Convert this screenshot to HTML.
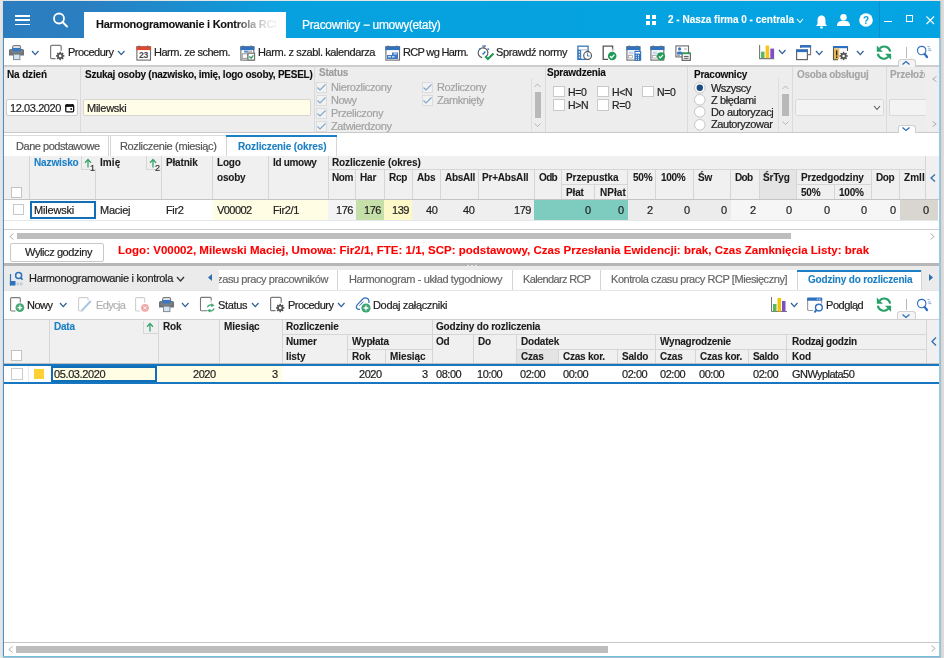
<!DOCTYPE html><html><head><meta charset="utf-8"><style>
html,body{margin:0;padding:0;}
body{width:944px;height:658px;overflow:hidden;background:#e5e5e5;position:relative;font-family:"Liberation Sans",sans-serif;-webkit-font-smoothing:antialiased;}
.t{will-change:transform;-webkit-text-stroke:0.2px currentColor}
.a{position:absolute;}
.t{position:absolute;white-space:nowrap;}
svg{overflow:visible}
</style></head><body>
<div class="a" style="left:0px;top:0px;width:944px;height:658px;background:#e5e5e5"></div>
<div class="a" style="left:940px;top:0px;width:4px;height:658px;background:linear-gradient(90deg,#d3d3d3,#dedede)"></div>
<div class="a" style="left:2px;top:0px;width:1px;height:658px;background:#e0dcd8"></div>
<div class="a" style="left:3px;top:1px;width:937px;height:656px;background:#fff"></div>
<div class="a" style="left:3px;top:1px;width:1px;height:656px;background:#4a90c8"></div>
<div class="a" style="left:939px;top:1px;width:1px;height:656px;background:#8ccfee"></div>
<div class="a" style="left:940px;top:1px;width:1px;height:657px;background:#aabcc6"></div>
<div class="a" style="left:3px;top:656px;width:937px;height:1px;background:#70bedd"></div>
<div class="a" style="left:3px;top:657px;width:938px;height:1px;background:#b0c0ca"></div>
<div class="a" style="left:3px;top:1px;width:937px;height:37px;background:linear-gradient(90deg,#2b7dbf 0%,#2a7fc1 9%,#1a8fd0 20%,#07a1df 31%,#04a4e2 100%)"></div>
<div class="a" style="left:15px;top:15px;width:15px;height:1.9px;background:#fff"></div>
<div class="a" style="left:15px;top:19.3px;width:15px;height:1.9px;background:#fff"></div>
<div class="a" style="left:15px;top:23.6px;width:15px;height:1.9px;background:#fff"></div>
<svg class="a" style="left:52px;top:12px;" width="18" height="18" viewBox="0 0 18 18"><circle cx="7" cy="6.5" r="5" fill="none" stroke="#fff" stroke-width="1.8"/><path d="M10.5 10 L15 14.5" stroke="#fff" stroke-width="2" stroke-linecap="round"/></svg>
<div class="a" style="left:84px;top:12px;width:202px;height:26px;background:#fff"></div>
<div class="t" style="left:96.00px;top:17.49px;font-size:11px;line-height:14px;color:#111;font-weight:bold;-webkit-text-stroke:0.1px currentColor;letter-spacing:-0.248px;width:180.00px;overflow:hidden;">Harmonogramowanie i Kontrola RCP</div>
<div class="a" style="left:234px;top:14px;width:52px;height:22px;background:linear-gradient(90deg,rgba(255,255,255,0) 0%,rgba(255,255,255,.55) 30%,rgba(255,255,255,.85) 60%,#fff 90%)"></div>
<div class="t" style="left:301.50px;top:16.84px;font-size:12px;line-height:16px;color:#fff;letter-spacing:-0.342px;">Pracownicy − umowy(etaty)</div>
<div class="a" style="left:646px;top:15px;width:4px;height:4px;background:#fff"></div>
<div class="a" style="left:646px;top:21px;width:4px;height:4px;background:#fff"></div>
<div class="a" style="left:652px;top:15px;width:4px;height:4px;background:#fff"></div>
<div class="a" style="left:652px;top:21px;width:4px;height:4px;background:#fff"></div>
<div class="t" style="left:668.00px;top:13.04px;font-size:10px;line-height:13px;color:#fff;font-weight:bold;-webkit-text-stroke:0.1px currentColor;letter-spacing:-0.006px;">2 - Nasza firma 0 - centrala</div>
<svg class="a" style="left:795.5px;top:17.5px;" width="8" height="5.5" viewBox="0 0 8 5.5"><path d="M1 1 L4.0 4.5 L7 1" fill="none" stroke="#fff" stroke-width="1.1"/></svg>
<svg class="a" style="left:815px;top:14px;" width="13" height="15" viewBox="0 0 13 15"><path d="M6.5 1.5 C3.5 1.5 2.5 4 2.5 6.5 L2.5 10 L1 12 L12 12 L10.5 10 L10.5 6.5 C10.5 4 9.5 1.5 6.5 1.5Z" fill="#fff"/><rect x="5" y="12.5" width="3" height="2" rx="1" fill="#fff"/></svg>
<svg class="a" style="left:837px;top:14px;" width="13" height="12" viewBox="0 0 13 12"><circle cx="6.5" cy="3.2" r="3.2" fill="#fff"/><path d="M0 12 C0 7.5 3 6.8 6.5 6.8 C10 6.8 13 7.5 13 12Z" fill="#fff"/></svg>
<svg class="a" style="left:859px;top:13px;" width="14" height="14" viewBox="0 0 14 14"><circle cx="7" cy="7" r="6.8" fill="#fff"/><text x="7" y="11" font-family="Liberation Sans" font-weight="bold" font-size="10" text-anchor="middle" fill="#0aa0df">?</text></svg>
<div class="a" style="left:879px;top:1px;width:1px;height:37px;background:#0b8fcb"></div>
<div class="a" style="left:884px;top:21px;width:8px;height:1px;background:#fff"></div>
<div class="a" style="left:906px;top:15px;width:7px;height:7px;border:1px solid #fff;box-sizing:border-box"></div>
<svg class="a" style="left:926px;top:15.5px;" width="9" height="9" viewBox="0 0 9 9"><path d="M0.5 0.5 L8 8 M8 0.5 L0.5 8" stroke="#fff" stroke-width="1.1"/></svg>
<div class="a" style="left:4px;top:65px;width:935px;height:2px;background:#cdcdcd"></div>
<svg class="a" style="left:9px;top:45px;" width="16" height="15" viewBox="0 0 16 15"><rect x="3.6" y="0.6" width="8" height="5" rx="1.5" fill="#fff" stroke="#7a7a7a" stroke-width="1.1"/><path d="M1.5 4 H13.5 A1.5 1.5 0 0 1 15 5.5 V10.6 H0 V5.5 A1.5 1.5 0 0 1 1.5 4Z" fill="#6e7175"/><rect x="1.6" y="5" width="11.8" height="3" fill="#7d8084"/><rect x="3.4" y="2.8" width="8.2" height="3.7" fill="#3a78c0"/><rect x="4.5" y="9.2" width="6.4" height="5.4" fill="#d3e6f6" stroke="#858a8f" stroke-width="1"/></svg>
<svg class="a" style="left:30.5px;top:49.5px;" width="8.5" height="5.6" viewBox="0 0 8.5 5.6"><path d="M1 1 L4.25 4.6 L7.5 1" fill="none" stroke="#2c5f9a" stroke-width="1.25"/></svg>
<svg class="a" style="left:50px;top:45px;" width="15" height="15" viewBox="0 0 15 15"><path d="M5.5 13.6 H1.8 A1.2 1.2 0 0 1 0.6 12.4 V1.6 A1.2 1.2 0 0 1 1.8 0.4 H10 A1.2 1.2 0 0 1 11.2 1.6 V5.8" fill="none" stroke="#7a7a7a" stroke-width="1.2"/><path d="M13.29 10.08 L14.44 10.19 L14.44 11.61 L13.29 11.72 L12.97 12.51 L13.70 13.40 L12.70 14.40 L11.81 13.67 L11.02 13.99 L10.91 15.14 L9.49 15.14 L9.38 13.99 L8.59 13.67 L7.70 14.40 L6.70 13.40 L7.43 12.51 L7.11 11.72 L5.96 11.61 L5.96 10.19 L7.11 10.08 L7.43 9.29 L6.70 8.40 L7.70 7.40 L8.59 8.13 L9.38 7.81 L9.49 6.66 L10.91 6.66 L11.02 7.81 L11.81 8.13 L12.70 7.40 L13.70 8.40 L12.97 9.29Z" fill="#555"/><circle cx="10.2" cy="10.9" r="1.3" fill="#fff"/></svg>
<div class="t" style="left:67.80px;top:45.49px;font-size:11px;line-height:14px;color:#222;letter-spacing:-0.526px;">Procedury</div>
<svg class="a" style="left:117px;top:49.5px;" width="8.5" height="5.6" viewBox="0 0 8.5 5.6"><path d="M1 1 L4.25 4.6 L7.5 1" fill="none" stroke="#2c5f9a" stroke-width="1.25"/></svg>
<svg class="a" style="left:135.6px;top:44.5px;" width="16" height="16" viewBox="0 0 16 16"><rect x="0.9" y="1.8" width="13.6" height="13.3" fill="#fff" stroke="#6c6c6c" stroke-width="1.1"/><rect x="0.4" y="1.3" width="14.7" height="3.8" fill="#df4a2e"/><rect x="2.6" y="0.5" width="1.2" height="2.8" fill="#6c6c6c"/><rect x="11.1" y="0.5" width="1.2" height="2.8" fill="#6c6c6c"/><text x="7.6" y="13.4" font-family="Liberation Sans" font-weight="bold" font-size="8.6" text-anchor="middle" fill="#444" letter-spacing="-0.3">23</text></svg>
<div class="t" style="left:153.60px;top:45.49px;font-size:11px;line-height:14px;color:#222;letter-spacing:-0.475px;">Harm. ze schem.</div>
<svg class="a" style="left:240px;top:44.5px;" width="16" height="16" viewBox="0 0 16 16"><rect x="0.9" y="1.8" width="12.9" height="13.3" fill="#fff" stroke="#6c6c6c" stroke-width="1.1"/><rect x="0.4" y="1.3" width="14.0" height="3.8" fill="#2f72bf"/><rect x="2.6" y="0.5" width="1.2" height="2.8" fill="#6c6c6c"/><rect x="10.4" y="0.5" width="1.2" height="2.8" fill="#6c6c6c"/><rect x="4" y="5.6" width="4.5" height="2" fill="#5a8fd0"/><rect x="8.5" y="5.6" width="3.5" height="2" fill="#bbb"/><rect x="2.2" y="8.8" width="5.5" height="4.5" fill="#fff" stroke="#8a8a8a" stroke-width="0.9"/><rect x="8" y="8.2" width="6.6" height="6.9" fill="#fff" stroke="#6c6c6c" stroke-width="1.1"/><path d="M9.3 11.6 l1.8 1.6 l2.3 -2.8" fill="none" stroke="#2aa05a" stroke-width="1.4"/></svg>
<div class="t" style="left:257.80px;top:45.49px;font-size:11px;line-height:14px;color:#222;letter-spacing:-0.407px;">Harm. z szabl. kalendarza</div>
<svg class="a" style="left:385px;top:44.5px;" width="16" height="16" viewBox="0 0 16 16"><rect x="0.9" y="1.8" width="13.6" height="13.3" fill="#fff" stroke="#6c6c6c" stroke-width="1.1"/><rect x="0.4" y="1.3" width="14.7" height="3.8" fill="#2f72bf"/><rect x="2.6" y="0.5" width="1.2" height="2.8" fill="#6c6c6c"/><rect x="11.1" y="0.5" width="1.2" height="2.8" fill="#6c6c6c"/><rect x="2" y="10" width="11" height="4" fill="#3e7bc4"/><rect x="7" y="7.5" width="6" height="2.5" fill="#3e7bc4"/><rect x="3" y="11" width="3" height="1.5" fill="#bcdcf2"/><rect x="7" y="11" width="2.5" height="1.5" fill="#bcdcf2"/><rect x="8.5" y="8.2" width="3.5" height="1.3" fill="#bcdcf2"/></svg>
<div class="t" style="left:403.40px;top:45.49px;font-size:11px;line-height:14px;color:#222;letter-spacing:-0.679px;">RCP wg Harm.</div>
<svg class="a" style="left:477px;top:44.5px;" width="18" height="16" viewBox="0 0 18 16"><path d="M9.2 11.5 A4.9 4.9 0 1 0 5.2 12.6" fill="none" stroke="#555" stroke-width="1.1"/><rect x="5.3" y="0.4" width="3.6" height="1.3" fill="#2d6fc0"/><rect x="6.6" y="1.4" width="1.2" height="2" fill="#777"/><path d="M2.2 4.8 L3.4 3.6 M11.8 4.8 L10.6 3.6" stroke="#2d6fc0" stroke-width="1.4"/><path d="M5.6 9.4 L8.4 6.4" stroke="#2d6fc0" stroke-width="1.5"/><path d="M8.2 11.3 L10.9 14 L16.5 8.4" fill="none" stroke="#1f9a57" stroke-width="2.1"/></svg>
<div class="t" style="left:496.40px;top:45.49px;font-size:11px;line-height:14px;color:#222;letter-spacing:-0.401px;">Sprawdź normy</div>
<svg class="a" style="left:577px;top:44.5px;" width="16" height="16" viewBox="0 0 16 16"><rect x="0.9" y="1.2" width="10.2" height="13.2" fill="#fff" stroke="#3a78c0" stroke-width="1.3"/><rect x="0.6" y="4.7" width="3.6" height="10" fill="#3a78c0"/><rect x="1.8" y="6.3" width="1.3" height="1.3" fill="#fff"/><rect x="1.8" y="9" width="1.3" height="1.3" fill="#fff"/><rect x="1.8" y="11.7" width="1.3" height="1.3" fill="#fff"/><path d="M4.2 4.8 H11" stroke="#9bb9dc" stroke-width="0.9"/><circle cx="10.6" cy="10.6" r="3.9" fill="#fff" stroke="#555" stroke-width="1.2"/><rect x="9.6" y="5.6" width="2" height="1.2" fill="#555"/><path d="M10.4 8.3 V11 H12.6" fill="none" stroke="#3a78c0" stroke-width="1"/></svg>
<svg class="a" style="left:602px;top:44.5px;" width="16" height="16" viewBox="0 0 16 16"><path d="M6 14.3 H1.2 V1.2 H10.6 V5.6" fill="none" stroke="#555" stroke-width="1.3"/><path d="M10.6 3.5 V5.8" stroke="#bbb" stroke-width="1.3"/><circle cx="10.2" cy="11" r="4.3" fill="#1f9a57"/><path d="M8 11.2 l1.6 1.6 l2.8 -3.2" fill="none" stroke="#fff" stroke-width="1.3"/></svg>
<svg class="a" style="left:625.6px;top:44.5px;" width="16" height="16" viewBox="0 0 16 16"><rect x="0.9" y="1.8" width="12.9" height="13.3" fill="#fff" stroke="#6c6c6c" stroke-width="1.1"/><rect x="0.4" y="1.3" width="14.0" height="3.8" fill="#2f72bf"/><rect x="2.6" y="0.5" width="1.2" height="2.8" fill="#6c6c6c"/><rect x="10.4" y="0.5" width="1.2" height="2.8" fill="#6c6c6c"/><rect x="2.5" y="6.5" width="5" height="3" fill="#c8d8ea"/><rect x="2.5" y="10.5" width="4" height="2.5" fill="#fff" stroke="#999" stroke-width="0.7"/><rect x="8.4" y="5.8" width="6.8" height="10" rx="0.6" fill="#2f72bf"/><rect x="9.5" y="7" width="4.6" height="1.6" fill="#fff"/><path d="M9.8 10.3 h1 M12 10.3 h1 M9.8 12.3 h1 M12 12.3 h1 M9.8 14.3 h1 M12 14.3 h1" stroke="#fff" stroke-width="1"/></svg>
<svg class="a" style="left:650px;top:44.5px;" width="16" height="16" viewBox="0 0 16 16"><rect x="0.9" y="1.8" width="12.9" height="13.3" fill="#fff" stroke="#6c6c6c" stroke-width="1.1"/><rect x="0.4" y="1.3" width="14.0" height="3.8" fill="#2f72bf"/><rect x="2.6" y="0.5" width="1.2" height="2.8" fill="#6c6c6c"/><rect x="10.4" y="0.5" width="1.2" height="2.8" fill="#6c6c6c"/><rect x="2.5" y="6.5" width="5" height="3" fill="#c8d8ea"/><rect x="2.5" y="10.5" width="4" height="2.5" fill="#fff" stroke="#999" stroke-width="0.7"/><circle cx="11" cy="11.3" r="4" fill="#1f9a57"/><path d="M9 11.5 l1.4 1.4 l2.6 -3" fill="none" stroke="#fff" stroke-width="1.3"/></svg>
<svg class="a" style="left:674.6px;top:44.5px;" width="16" height="16" viewBox="0 0 16 16"><rect x="0.9" y="0.9" width="12.6" height="11" fill="#fff" stroke="#6c6c6c" stroke-width="1.1"/><circle cx="4.6" cy="3.9" r="1.6" fill="#3a78c0"/><path d="M2 9.5 V7.6 C2 6 7.2 6 7.2 7.6 V9.5Z" fill="#3a78c0"/><rect x="2" y="9.4" width="3" height="1.6" fill="#9ab"/><path d="M9 4 h3" stroke="#aaa" stroke-width="1"/><rect x="7.1" y="8.1" width="8.2" height="7.2" fill="#fff" stroke="#555" stroke-width="1.1"/><rect x="6.6" y="7.6" width="9.2" height="1.6" fill="#2aa05a"/><path d="M8.8 11.4 h4.8 M8.8 13.3 h4.8" stroke="#555" stroke-width="1"/></svg>
<svg class="a" style="left:758.8px;top:45.3px;" width="16" height="15" viewBox="0 0 16 15"><path d="M0.6 0 V13.6 H15.2" fill="none" stroke="#777" stroke-width="1.1"/><rect x="2" y="6.6" width="3.5" height="6.5" fill="#5bb865"/><rect x="6.6" y="0.6" width="3.6" height="12.5" fill="#fcc419"/><rect x="11.3" y="3.6" width="3.8" height="9.5" fill="#7e4fc8"/></svg>
<svg class="a" style="left:778px;top:49.2px;" width="8.5" height="5.6" viewBox="0 0 8.5 5.6"><path d="M1 1 L4.25 4.6 L7.5 1" fill="none" stroke="#2c5f9a" stroke-width="1.25"/></svg>
<svg class="a" style="left:796px;top:45px;" width="16" height="16" viewBox="0 0 16 16"><path d="M4.6 3 V0.5 H14.6 V9.6 H11.5" fill="none" stroke="#777" stroke-width="1.1"/><rect x="4.1" y="0.2" width="10.9" height="2.4" fill="#2f6fbf"/><rect x="0.6" y="5" width="10.8" height="9.6" fill="#fff" stroke="#666" stroke-width="1.2"/><rect x="0" y="4.5" width="12" height="2.6" fill="#2f6fbf"/></svg>
<svg class="a" style="left:815.2px;top:49.5px;" width="8.5" height="5.6" viewBox="0 0 8.5 5.6"><path d="M1 1 L4.25 4.6 L7.5 1" fill="none" stroke="#2c5f9a" stroke-width="1.25"/></svg>
<svg class="a" style="left:833px;top:45.5px;" width="16" height="15" viewBox="0 0 16 15"><path d="M14.5 5 V0.5 H0.5 V13.6 H5" fill="none" stroke="#555" stroke-width="1.1"/><rect x="0" y="0" width="15" height="2.2" fill="#2f6fbf"/><rect x="1" y="2.6" width="5.2" height="10.6" fill="#e9b64f"/><rect x="3" y="4.5" width="1.3" height="5" fill="#222"/><rect x="3" y="10.5" width="1.3" height="1.5" fill="#222"/><path d="M13.60 9.21 L14.74 9.31 L14.74 10.69 L13.60 10.79 L13.28 11.56 L14.02 12.44 L13.04 13.42 L12.16 12.68 L11.39 13.00 L11.29 14.14 L9.91 14.14 L9.81 13.00 L9.04 12.68 L8.16 13.42 L7.18 12.44 L7.92 11.56 L7.60 10.79 L6.46 10.69 L6.46 9.31 L7.60 9.21 L7.92 8.44 L7.18 7.56 L8.16 6.58 L9.04 7.32 L9.81 7.00 L9.91 5.86 L11.29 5.86 L11.39 7.00 L12.16 7.32 L13.04 6.58 L14.02 7.56 L13.28 8.44Z" fill="#555"/><circle cx="10.6" cy="10" r="1.2" fill="#fff"/></svg>
<svg class="a" style="left:856.2px;top:49.5px;" width="8.5" height="5.6" viewBox="0 0 8.5 5.6"><path d="M1 1 L4.25 4.6 L7.5 1" fill="none" stroke="#2c5f9a" stroke-width="1.25"/></svg>
<svg class="a" style="left:875.5px;top:44.8px;" width="16" height="16" viewBox="0 0 16 16"><path d="M14.2 6.6 A6.1 6.1 0 0 0 3.6 3.6" fill="none" stroke="#27a068" stroke-width="2.1"/><path d="M0.8 0.6 V6.7 H6.9Z" fill="#27a068"/><path d="M1.8 8.7 A6.1 6.1 0 0 0 12.4 11.6" fill="none" stroke="#27a068" stroke-width="2.1"/><path d="M15.1 14.8 V8.7 H9Z" fill="#27a068"/></svg>
<div class="a" style="left:906px;top:47px;width:1px;height:10.5px;background:#b8b8b8"></div>
<svg class="a" style="left:917px;top:45.3px;" width="16" height="15" viewBox="0 0 16 15"><circle cx="4.7" cy="5.5" r="4.2" fill="none" stroke="#2f6fc0" stroke-width="1.15"/><path d="M7.6 8.9 L10 12" stroke="#2f6fc0" stroke-width="2.3" stroke-linecap="round"/><path d="M10.4 1.6 h2.4 M10.9 3.9 h3 M11.4 5.6 h3" stroke="#86a6cc" stroke-width="0.9"/></svg>
<div class="a" style="left:897.5px;top:59px;width:18.5px;height:7.5px;background:#f4f4f4;border:1px solid #cfcfcf;border-bottom:none;border-radius:3px 3px 0 0;box-sizing:border-box"></div>
<svg class="a" style="left:902px;top:60.5px;" width="8" height="4" viewBox="0 0 8 4"><path d="M0.5 3.5 L4 0.5 L7.5 3.5" fill="none" stroke="#2f6fb0" stroke-width="1.3"/></svg>
<div class="a" style="left:4px;top:67px;width:935px;height:65px;background:#ededed"></div>
<div class="a" style="left:4px;top:132px;width:935px;height:1px;background:#c9c9c9"></div>
<div class="a" style="left:80px;top:67px;width:1px;height:65px;background:#dadada"></div>
<div class="t" style="left:7.10px;top:68.13px;font-size:10px;line-height:13px;color:#0e0e0e;font-weight:bold;-webkit-text-stroke:0.1px currentColor;letter-spacing:-0.140px;">Na dzień</div>
<div class="a" style="left:6px;top:99px;width:72px;height:17px;background:#fff;border:1px solid #cdcdcd;border-radius:2px;box-sizing:border-box"></div>
<div class="t" style="left:9.80px;top:100.69px;font-size:11px;line-height:14px;color:#222;letter-spacing:-0.405px;">12.03.2020</div>
<svg class="a" style="left:65px;top:103px;" width="10" height="10" viewBox="0 0 10 10"><rect x="0.75" y="1.9" width="7.9" height="6.9" rx="1" fill="#fff" stroke="#111" stroke-width="1.3"/><rect x="0.4" y="1.6" width="8.6" height="2.3" fill="#111"/><path d="M1.3 1.9 Q2.3 0 3.3 1.9Z M6.1 1.9 Q7.1 0 8.1 1.9Z" fill="#111"/><circle cx="6.2" cy="6" r="1" fill="#111"/></svg>
<div class="t" style="left:84.70px;top:68.13px;font-size:10px;line-height:13px;color:#0e0e0e;font-weight:bold;-webkit-text-stroke:0.1px currentColor;letter-spacing:-0.258px;width:227.80px;overflow:hidden;">Szukaj osoby (nazwisko, imię, logo osoby, PESEL)</div>
<div class="a" style="left:83px;top:99px;width:228px;height:17px;background:#fffde8;border:1px solid #d6d6cc;border-radius:2px;box-sizing:border-box"></div>
<div class="t" style="left:87.30px;top:100.69px;font-size:11px;line-height:14px;color:#222;letter-spacing:-0.257px;">Milewski</div>
<div class="a" style="left:314px;top:67px;width:1px;height:65px;background:#dadada"></div>
<div class="t" style="left:318.50px;top:65.63px;font-size:10px;line-height:13px;color:#9c9c9c;font-weight:bold;-webkit-text-stroke:0.1px currentColor;letter-spacing:-0.244px;">Status</div>
<div class="a" style="left:316px;top:82px;width:11px;height:11px;background:#f2f2f2;border:1px solid #dcdcdc;box-sizing:border-box"></div>
<svg class="a" style="left:316px;top:82px;" width="11" height="11" viewBox="0 0 11 11"><path d="M1.5 5.5 L4 8 L9.5 2.5" fill="none" stroke="#7ea6cc" stroke-width="1.1"/></svg>
<div class="t" style="left:330.70px;top:79.69px;font-size:11px;line-height:14px;color:#a2a2a2;letter-spacing:-0.362px;">Nierozliczony</div>
<div class="a" style="left:316px;top:95px;width:11px;height:11px;background:#f2f2f2;border:1px solid #dcdcdc;box-sizing:border-box"></div>
<svg class="a" style="left:316px;top:95px;" width="11" height="11" viewBox="0 0 11 11"><path d="M1.5 5.5 L4 8 L9.5 2.5" fill="none" stroke="#7ea6cc" stroke-width="1.1"/></svg>
<div class="t" style="left:330.70px;top:92.69px;font-size:11px;line-height:14px;color:#a2a2a2;letter-spacing:-0.516px;">Nowy</div>
<div class="a" style="left:316px;top:108px;width:11px;height:11px;background:#f2f2f2;border:1px solid #dcdcdc;box-sizing:border-box"></div>
<svg class="a" style="left:316px;top:108px;" width="11" height="11" viewBox="0 0 11 11"><path d="M1.5 5.5 L4 8 L9.5 2.5" fill="none" stroke="#7ea6cc" stroke-width="1.1"/></svg>
<div class="t" style="left:330.70px;top:105.69px;font-size:11px;line-height:14px;color:#a2a2a2;letter-spacing:-0.383px;">Przeliczony</div>
<div class="a" style="left:316px;top:121px;width:11px;height:11px;background:#f2f2f2;border:1px solid #dcdcdc;box-sizing:border-box"></div>
<svg class="a" style="left:316px;top:121px;" width="11" height="11" viewBox="0 0 11 11"><path d="M1.5 5.5 L4 8 L9.5 2.5" fill="none" stroke="#7ea6cc" stroke-width="1.1"/></svg>
<div class="t" style="left:330.70px;top:118.69px;font-size:11px;line-height:14px;color:#a2a2a2;letter-spacing:-0.409px;">Zatwierdzony</div>
<div class="a" style="left:422.4px;top:82px;width:11px;height:11px;background:#f2f2f2;border:1px solid #dcdcdc;box-sizing:border-box"></div>
<svg class="a" style="left:422.4px;top:82px;" width="11" height="11" viewBox="0 0 11 11"><path d="M1.5 5.5 L4 8 L9.5 2.5" fill="none" stroke="#7ea6cc" stroke-width="1.1"/></svg>
<div class="t" style="left:437.00px;top:79.69px;font-size:11px;line-height:14px;color:#a2a2a2;letter-spacing:-0.399px;">Rozliczony</div>
<div class="a" style="left:422.4px;top:95px;width:11px;height:11px;background:#f2f2f2;border:1px solid #dcdcdc;box-sizing:border-box"></div>
<svg class="a" style="left:422.4px;top:95px;" width="11" height="11" viewBox="0 0 11 11"><path d="M1.5 5.5 L4 8 L9.5 2.5" fill="none" stroke="#7ea6cc" stroke-width="1.1"/></svg>
<div class="t" style="left:437.00px;top:92.69px;font-size:11px;line-height:14px;color:#a2a2a2;letter-spacing:-0.423px;">Zamknięty</div>
<div class="a" style="left:316px;top:132px;width:230px;height:1px;background:#c9c9c9"></div>
<div class="a" style="left:316px;top:133px;width:230px;height:3px;background:#fff"></div>
<div class="a" style="left:531px;top:78px;width:1px;height:54px;background:#dedede"></div>
<svg class="a" style="left:534.4px;top:83px;" width="7" height="4.5" viewBox="0 0 7 4.5"><path d="M0.5 4 L3.5 1 L6.5 4" fill="none" stroke="#b5b5b5"/></svg>
<div class="a" style="left:535px;top:91.7px;width:5.8px;height:26px;background:#b9b9b9"></div>
<svg class="a" style="left:534.4px;top:123px;" width="7" height="4.5" viewBox="0 0 7 4.5"><path d="M0.5 0.5 L3.5 3.5 L6.5 0.5" fill="none" stroke="#b5b5b5"/></svg>
<div class="a" style="left:545px;top:67px;width:1px;height:65px;background:#dadada"></div>
<div class="t" style="left:547.00px;top:66.44px;font-size:10px;line-height:13px;color:#0e0e0e;font-weight:bold;-webkit-text-stroke:0.1px currentColor;letter-spacing:-0.230px;">Sprawdzenia</div>
<div class="a" style="left:553px;top:85.5px;width:12px;height:11.5px;background:#fff;border:1px solid #c9c9c9;box-sizing:border-box"></div>
<div class="t" style="left:568.30px;top:84.56px;font-size:10.5px;line-height:14px;color:#222;letter-spacing:-0.326px;">H=0</div>
<div class="a" style="left:597px;top:85.5px;width:12px;height:11.5px;background:#fff;border:1px solid #c9c9c9;box-sizing:border-box"></div>
<div class="t" style="left:612.30px;top:84.56px;font-size:10.5px;line-height:14px;color:#222;letter-spacing:-0.355px;">H&lt;N</div>
<div class="a" style="left:642px;top:85.5px;width:12px;height:11.5px;background:#fff;border:1px solid #c9c9c9;box-sizing:border-box"></div>
<div class="t" style="left:657.30px;top:84.56px;font-size:10.5px;line-height:14px;color:#222;letter-spacing:-0.326px;">N=0</div>
<div class="a" style="left:553px;top:99px;width:12px;height:11.5px;background:#fff;border:1px solid #c9c9c9;box-sizing:border-box"></div>
<div class="t" style="left:568.30px;top:98.06px;font-size:10.5px;line-height:14px;color:#222;letter-spacing:-0.355px;">H&gt;N</div>
<div class="a" style="left:597px;top:99px;width:12px;height:11.5px;background:#fff;border:1px solid #c9c9c9;box-sizing:border-box"></div>
<div class="t" style="left:612.30px;top:98.06px;font-size:10.5px;line-height:14px;color:#222;letter-spacing:-0.326px;">R=0</div>
<div class="a" style="left:687px;top:67px;width:1px;height:65px;background:#dadada"></div>
<div class="t" style="left:694.40px;top:68.03px;font-size:10px;line-height:13px;color:#0e0e0e;font-weight:bold;-webkit-text-stroke:0.1px currentColor;letter-spacing:-0.258px;">Pracownicy</div>
<svg class="a" style="left:694.2px;top:82.0px;" width="12" height="12" viewBox="0 0 12 12"><circle cx="5.8" cy="5.8" r="5.3" fill="#fff" stroke="#c4c4c4" stroke-width="1"/><circle cx="5.8" cy="5.8" r="3.2" fill="#1a4a87"/></svg>
<div class="t" style="left:711.00px;top:80.79px;font-size:11px;line-height:14px;color:#222;letter-spacing:-0.526px;width:62.00px;overflow:hidden;">Wszyscy</div>
<svg class="a" style="left:694.2px;top:94.2px;" width="12" height="12" viewBox="0 0 12 12"><circle cx="5.8" cy="5.8" r="5.3" fill="#fff" stroke="#c4c4c4" stroke-width="1"/></svg>
<div class="t" style="left:711.00px;top:92.99px;font-size:11px;line-height:14px;color:#222;letter-spacing:-0.402px;width:62.00px;overflow:hidden;">Z błędami</div>
<svg class="a" style="left:694.2px;top:106.39999999999999px;" width="12" height="12" viewBox="0 0 12 12"><circle cx="5.8" cy="5.8" r="5.3" fill="#fff" stroke="#c4c4c4" stroke-width="1"/></svg>
<div class="t" style="left:711.00px;top:105.19px;font-size:11px;line-height:14px;color:#222;letter-spacing:-0.373px;width:62.00px;overflow:hidden;">Do autoryzacji</div>
<svg class="a" style="left:694.2px;top:118.6px;" width="12" height="12" viewBox="0 0 12 12"><circle cx="5.8" cy="5.8" r="5.3" fill="#fff" stroke="#c4c4c4" stroke-width="1"/></svg>
<div class="t" style="left:711.00px;top:117.39px;font-size:11px;line-height:14px;color:#222;letter-spacing:-0.430px;width:62.00px;overflow:hidden;">Zautoryzowany</div>
<div class="a" style="left:694px;top:132px;width:100px;height:1px;background:#c9c9c9"></div>
<div class="a" style="left:694px;top:133px;width:100px;height:3px;background:#fff"></div>
<div class="a" style="left:778px;top:78px;width:1px;height:54px;background:#dedede"></div>
<svg class="a" style="left:781.5px;top:85px;" width="7" height="4.5" viewBox="0 0 7 4.5"><path d="M0.5 4 L3.5 1 L6.5 4" fill="none" stroke="#b5b5b5"/></svg>
<div class="a" style="left:782.2px;top:94.2px;width:6.5px;height:22px;background:#b9b9b9"></div>
<svg class="a" style="left:781.5px;top:120.5px;" width="7" height="4.5" viewBox="0 0 7 4.5"><path d="M0.5 0.5 L3.5 3.5 L6.5 0.5" fill="none" stroke="#b5b5b5"/></svg>
<div class="a" style="left:792px;top:67px;width:1px;height:65px;background:#dadada"></div>
<div class="t" style="left:796.70px;top:68.03px;font-size:10px;line-height:13px;color:#a5a5a5;font-weight:bold;-webkit-text-stroke:0.1px currentColor;letter-spacing:-0.290px;">Osoba obsługuj</div>
<div class="a" style="left:795px;top:99px;width:89px;height:17px;background:#f3f3f3;border:1px solid #d9d9d9;border-radius:2px;box-sizing:border-box"></div>
<svg class="a" style="left:873px;top:104.8px;" width="8" height="5.5" viewBox="0 0 8 5.5"><path d="M1 1 L4.0 4.5 L7 1" fill="none" stroke="#555" stroke-width="1.1"/></svg>
<div class="a" style="left:886px;top:67px;width:1px;height:65px;background:#dadada"></div>
<div class="t" style="left:890.40px;top:68.03px;font-size:10px;line-height:13px;color:#a5a5a5;font-weight:bold;-webkit-text-stroke:0.1px currentColor;letter-spacing:-0.185px;width:34.60px;overflow:hidden;">Przełożony</div>
<div class="a" style="left:889px;top:99px;width:37.5px;height:17px;background:#f3f3f3;border:1px solid #d9d9d9;border-right:none;border-radius:2px 0 0 2px;box-sizing:border-box"></div>
<div class="a" style="left:926px;top:67px;width:13px;height:65px;background:#eeeeee"></div>
<svg class="a" style="left:931.5px;top:75.6px;" width="5" height="6" viewBox="0 0 5 6"><path d="M4.5 0.5 L0.8 3 L4.5 5.5" fill="none" stroke="#b0b0b0"/></svg>
<svg class="a" style="left:931.5px;top:120.5px;" width="5" height="6" viewBox="0 0 5 6"><path d="M0.5 0.5 L4.2 3 L0.5 5.5" fill="none" stroke="#b0b0b0"/></svg>
<div class="a" style="left:897.5px;top:124.5px;width:18px;height:8px;background:#fff;border:1px solid #cfcfcf;border-bottom:none;border-radius:3px 3px 0 0;box-sizing:border-box"></div>
<svg class="a" style="left:902px;top:126.5px;" width="8" height="4" viewBox="0 0 8 4"><path d="M0.5 0.5 L4 3.5 L7.5 0.5" fill="none" stroke="#2f6fb0" stroke-width="1.3"/></svg>
<div class="a" style="left:4px;top:133px;width:935px;height:23px;background:#fff"></div>
<div class="a" style="left:4px;top:135px;width:332px;height:1px;background:#dcdcdc"></div>
<div class="a" style="left:108px;top:136px;width:1px;height:20px;background:#d5d5d5"></div>
<div class="a" style="left:110px;top:136px;width:1px;height:20px;background:#d5d5d5"></div>
<div class="a" style="left:226px;top:136px;width:1px;height:20px;background:#d5d5d5"></div>
<div class="a" style="left:336px;top:136px;width:1px;height:20px;background:#d5d5d5"></div>
<div class="t" style="left:15.60px;top:138.89px;font-size:11px;line-height:14px;color:#555;letter-spacing:-0.460px;">Dane podstawowe</div>
<div class="t" style="left:120.30px;top:138.89px;font-size:11px;line-height:14px;color:#555;letter-spacing:-0.353px;">Rozliczenie (miesiąc)</div>
<div class="a" style="left:226.4px;top:134.5px;width:110.6px;height:2px;background:#1a7fc4"></div>
<div class="t" style="left:238.00px;top:139.73px;font-size:10px;line-height:13px;color:#1a7fc4;font-weight:bold;-webkit-text-stroke:0.1px currentColor;letter-spacing:-0.115px;">Rozliczenie (okres)</div>
<div class="a" style="left:4px;top:156px;width:935px;height:43px;background:#f0f0f0"></div>
<div class="a" style="left:4px;top:199px;width:935px;height:1px;background:#c4c4c4"></div>
<div class="a" style="left:759.5px;top:169.5px;width:36.5px;height:29.5px;background:#e4e4e4"></div>
<div class="a" style="left:29px;top:156px;width:1px;height:43px;background:#d6d6d6"></div>
<div class="a" style="left:95px;top:156px;width:1px;height:43px;background:#d6d6d6"></div>
<div class="a" style="left:161px;top:156px;width:1px;height:43px;background:#d6d6d6"></div>
<div class="a" style="left:212px;top:156px;width:1px;height:43px;background:#d6d6d6"></div>
<div class="a" style="left:268px;top:156px;width:1px;height:43px;background:#d6d6d6"></div>
<div class="a" style="left:328px;top:156px;width:1px;height:43px;background:#d6d6d6"></div>
<div class="a" style="left:925px;top:156px;width:1px;height:43px;background:#d6d6d6"></div>
<div class="a" style="left:355px;top:169.5px;width:1px;height:29.5px;background:#d6d6d6"></div>
<div class="a" style="left:384px;top:169.5px;width:1px;height:29.5px;background:#d6d6d6"></div>
<div class="a" style="left:412px;top:169.5px;width:1px;height:29.5px;background:#d6d6d6"></div>
<div class="a" style="left:440px;top:169.5px;width:1px;height:29.5px;background:#d6d6d6"></div>
<div class="a" style="left:478px;top:169.5px;width:1px;height:29.5px;background:#d6d6d6"></div>
<div class="a" style="left:534px;top:169.5px;width:1px;height:29.5px;background:#d6d6d6"></div>
<div class="a" style="left:561px;top:169.5px;width:1px;height:29.5px;background:#d6d6d6"></div>
<div class="a" style="left:627px;top:169.5px;width:1px;height:29.5px;background:#d6d6d6"></div>
<div class="a" style="left:655px;top:169.5px;width:1px;height:29.5px;background:#d6d6d6"></div>
<div class="a" style="left:693px;top:169.5px;width:1px;height:29.5px;background:#d6d6d6"></div>
<div class="a" style="left:730px;top:169.5px;width:1px;height:29.5px;background:#d6d6d6"></div>
<div class="a" style="left:759px;top:169.5px;width:1px;height:29.5px;background:#d6d6d6"></div>
<div class="a" style="left:796px;top:169.5px;width:1px;height:29.5px;background:#d6d6d6"></div>
<div class="a" style="left:871px;top:169.5px;width:1px;height:29.5px;background:#d6d6d6"></div>
<div class="a" style="left:899px;top:169.5px;width:1px;height:29.5px;background:#d6d6d6"></div>
<div class="a" style="left:594px;top:184px;width:1px;height:15px;background:#d6d6d6"></div>
<div class="a" style="left:834px;top:184px;width:1px;height:15px;background:#d6d6d6"></div>
<div class="a" style="left:328.1px;top:169px;width:597.4px;height:1px;background:#d6d6d6"></div>
<div class="a" style="left:561.4px;top:184px;width:66.10000000000002px;height:1px;background:#d6d6d6"></div>
<div class="a" style="left:796px;top:184px;width:75.29999999999995px;height:1px;background:#d6d6d6"></div>
<div class="t" style="left:34.20px;top:155.63px;font-size:10px;line-height:13px;color:#1a7fc4;font-weight:bold;-webkit-text-stroke:0.1px currentColor;letter-spacing:-0.121px;">Nazwisko</div>
<div class="a" style="left:80.5px;top:156px;width:15px;height:13.5px;background:#f0f0f0;border-left:1px solid #d6d6d6;border-bottom:1px solid #d6d6d6;box-sizing:border-box"></div>
<svg class="a" style="left:83.5px;top:157.5px;" width="9" height="10" viewBox="0 0 9 10"><path d="M4 9.5 V1.8 M1 4.8 L4 1.5 L7 4.8" fill="none" stroke="#38a56c" stroke-width="1.3"/></svg>
<div class="t" style="left:89.70px;top:161.68px;font-size:9px;line-height:12px;color:#333;">1</div>
<div class="t" style="left:100.00px;top:155.63px;font-size:10px;line-height:13px;color:#1c1c1c;font-weight:bold;-webkit-text-stroke:0.1px currentColor;letter-spacing:0.073px;">Imię</div>
<div class="a" style="left:146px;top:156px;width:15px;height:13.5px;background:#f0f0f0;border-left:1px solid #d6d6d6;border-bottom:1px solid #d6d6d6;box-sizing:border-box"></div>
<svg class="a" style="left:149px;top:157.5px;" width="9" height="10" viewBox="0 0 9 10"><path d="M4 9.5 V1.8 M1 4.8 L4 1.5 L7 4.8" fill="none" stroke="#38a56c" stroke-width="1.3"/></svg>
<div class="t" style="left:155.20px;top:161.68px;font-size:9px;line-height:12px;color:#333;">2</div>
<div class="t" style="left:166.00px;top:155.63px;font-size:10px;line-height:13px;color:#1c1c1c;font-weight:bold;-webkit-text-stroke:0.1px currentColor;letter-spacing:-0.170px;">Płatnik</div>
<div class="t" style="left:217.30px;top:155.63px;font-size:10px;line-height:13px;color:#1c1c1c;font-weight:bold;-webkit-text-stroke:0.1px currentColor;letter-spacing:-0.214px;">Logo</div>
<div class="t" style="left:217.30px;top:171.44px;font-size:10px;line-height:13px;color:#1c1c1c;font-weight:bold;-webkit-text-stroke:0.1px currentColor;letter-spacing:-0.206px;">osoby</div>
<div class="t" style="left:273.20px;top:155.63px;font-size:10px;line-height:13px;color:#1c1c1c;font-weight:bold;-webkit-text-stroke:0.1px currentColor;letter-spacing:-0.314px;">Id umowy</div>
<div class="t" style="left:332.20px;top:155.63px;font-size:10px;line-height:13px;color:#1c1c1c;font-weight:bold;-webkit-text-stroke:0.1px currentColor;letter-spacing:-0.104px;">Rozliczenie (okres)</div>
<div class="t" style="left:332.20px;top:170.94px;font-size:10px;line-height:13px;color:#1c1c1c;font-weight:bold;-webkit-text-stroke:0.1px currentColor;letter-spacing:-0.407px;">Nom</div>
<div class="t" style="left:360.30px;top:170.94px;font-size:10px;line-height:13px;color:#1c1c1c;font-weight:bold;-webkit-text-stroke:0.1px currentColor;letter-spacing:-0.195px;">Har</div>
<div class="t" style="left:388.60px;top:170.94px;font-size:10px;line-height:13px;color:#1c1c1c;font-weight:bold;-webkit-text-stroke:0.1px currentColor;letter-spacing:-0.220px;">Rcp</div>
<div class="t" style="left:416.60px;top:170.94px;font-size:10px;line-height:13px;color:#1c1c1c;font-weight:bold;-webkit-text-stroke:0.1px currentColor;letter-spacing:-0.220px;">Abs</div>
<div class="t" style="left:444.60px;top:170.94px;font-size:10px;line-height:13px;color:#1c1c1c;font-weight:bold;-webkit-text-stroke:0.1px currentColor;letter-spacing:-0.278px;">AbsAll</div>
<div class="t" style="left:482.00px;top:170.94px;font-size:10px;line-height:13px;color:#1c1c1c;font-weight:bold;-webkit-text-stroke:0.1px currentColor;letter-spacing:-0.197px;">Pr+AbsAll</div>
<div class="t" style="left:538.50px;top:170.94px;font-size:10px;line-height:13px;color:#1c1c1c;font-weight:bold;-webkit-text-stroke:0.1px currentColor;letter-spacing:-0.632px;">Odb</div>
<div class="t" style="left:566.40px;top:170.94px;font-size:10px;line-height:13px;color:#1c1c1c;font-weight:bold;-webkit-text-stroke:0.1px currentColor;letter-spacing:-0.076px;">Przepustka</div>
<div class="t" style="left:632.50px;top:170.94px;font-size:10px;line-height:13px;color:#1c1c1c;font-weight:bold;-webkit-text-stroke:0.1px currentColor;letter-spacing:-0.234px;">50%</div>
<div class="t" style="left:660.70px;top:170.94px;font-size:10px;line-height:13px;color:#1c1c1c;font-weight:bold;-webkit-text-stroke:0.1px currentColor;letter-spacing:-0.344px;">100%</div>
<div class="t" style="left:697.60px;top:170.94px;font-size:10px;line-height:13px;color:#1c1c1c;font-weight:bold;-webkit-text-stroke:0.1px currentColor;letter-spacing:-0.253px;">Św</div>
<div class="t" style="left:735.30px;top:170.94px;font-size:10px;line-height:13px;color:#1c1c1c;font-weight:bold;-webkit-text-stroke:0.1px currentColor;letter-spacing:-0.680px;">Dob</div>
<div class="t" style="left:763.40px;top:170.94px;font-size:10px;line-height:13px;color:#1c1c1c;font-weight:bold;-webkit-text-stroke:0.1px currentColor;letter-spacing:-0.200px;">ŚrTyg</div>
<div class="t" style="left:801.00px;top:170.94px;font-size:10px;line-height:13px;color:#1c1c1c;font-weight:bold;-webkit-text-stroke:0.1px currentColor;letter-spacing:-0.192px;">Przedgodziny</div>
<div class="t" style="left:875.50px;top:170.94px;font-size:10px;line-height:13px;color:#1c1c1c;font-weight:bold;-webkit-text-stroke:0.1px currentColor;letter-spacing:-0.380px;">Dop</div>
<div class="t" style="left:903.50px;top:170.94px;font-size:10px;line-height:13px;color:#1c1c1c;font-weight:bold;-webkit-text-stroke:0.1px currentColor;letter-spacing:0.061px;">ZmlI</div>
<div class="t" style="left:566.40px;top:185.84px;font-size:10px;line-height:13px;color:#1c1c1c;font-weight:bold;-webkit-text-stroke:0.1px currentColor;letter-spacing:-0.160px;">Płat</div>
<div class="t" style="left:599.50px;top:185.84px;font-size:10px;line-height:13px;color:#1c1c1c;font-weight:bold;-webkit-text-stroke:0.1px currentColor;letter-spacing:0.067px;">NPłat</div>
<div class="t" style="left:801.00px;top:185.84px;font-size:10px;line-height:13px;color:#1c1c1c;font-weight:bold;-webkit-text-stroke:0.1px currentColor;letter-spacing:-0.234px;">50%</div>
<div class="t" style="left:838.60px;top:185.84px;font-size:10px;line-height:13px;color:#1c1c1c;font-weight:bold;-webkit-text-stroke:0.1px currentColor;letter-spacing:-0.224px;">100%</div>
<div class="a" style="left:11px;top:187px;width:11px;height:11px;background:#fff;border:1px solid #c3c3c3;box-sizing:border-box"></div>
<div class="a" style="left:926px;top:156px;width:13px;height:43px;background:#f0f0f0"></div>
<svg class="a" style="left:929.5px;top:173.5px;" width="6" height="8" viewBox="0 0 6 8"><path d="M5 0.5 L1 4 L5 7.5" fill="none" stroke="#2f6fb0" stroke-width="1.3"/></svg>
<div class="a" style="left:4px;top:200px;width:935px;height:20px;background:#fff"></div>
<div class="a" style="left:4px;top:220px;width:935px;height:1px;background:#e2e7ec"></div>
<div class="a" style="left:12.7px;top:204.3px;width:11px;height:11px;background:#fff;border:1px solid #c8c8c8;box-sizing:border-box"></div>
<div class="a" style="left:213.4px;top:200px;width:114.7px;height:20px;background:#fffde3"></div>
<div class="a" style="left:328.1px;top:200px;width:27.5px;height:20px;background:#f4f4f4"></div>
<div class="a" style="left:355.6px;top:200px;width:28.8px;height:20px;background:#c5dfa8"></div>
<div class="a" style="left:384.4px;top:200px;width:28px;height:20px;background:#fdf8c8"></div>
<div class="a" style="left:412.4px;top:200px;width:121.8px;height:20px;background:#efefef"></div>
<div class="a" style="left:534.2px;top:200px;width:93.8px;height:20px;background:#7ecbc0"></div>
<div class="a" style="left:628px;top:200px;width:102.7px;height:20px;background:#ececec"></div>
<div class="a" style="left:730.7px;top:200px;width:169px;height:20px;background:#f6f6f6"></div>
<div class="a" style="left:900px;top:200px;width:38px;height:20px;background:#d9d5cf"></div>
<div class="a" style="left:30.2px;top:200.5px;width:65.6px;height:18.7px;border:2px solid #0f6fb8;box-sizing:border-box"></div>
<div class="t" style="left:34.20px;top:202.79px;font-size:11px;line-height:14px;color:#222;letter-spacing:-0.195px;">Milewski</div>
<div class="t" style="left:100.00px;top:202.79px;font-size:11px;line-height:14px;color:#222;letter-spacing:-0.265px;">Maciej</div>
<div class="t" style="left:166.00px;top:202.79px;font-size:11px;line-height:14px;color:#222;letter-spacing:-0.355px;">Fir2</div>
<div class="t" style="left:217.30px;top:202.79px;font-size:11px;line-height:14px;color:#222;letter-spacing:-0.554px;">V00002</div>
<div class="t" style="left:273.20px;top:202.79px;font-size:11px;line-height:14px;color:#222;letter-spacing:-0.351px;">Fir2/1</div>
<div class="t" style="left:336.02px;top:202.79px;font-size:11px;line-height:14px;color:#222;letter-spacing:-0.459px;">176</div>
<div class="t" style="left:363.72px;top:202.79px;font-size:11px;line-height:14px;color:#222;letter-spacing:-0.459px;">176</div>
<div class="t" style="left:391.52px;top:202.79px;font-size:11px;line-height:14px;color:#222;letter-spacing:-0.459px;">139</div>
<div class="t" style="left:425.68px;top:202.79px;font-size:11px;line-height:14px;color:#222;letter-spacing:-0.459px;">40</div>
<div class="t" style="left:462.88px;top:202.79px;font-size:11px;line-height:14px;color:#222;letter-spacing:-0.459px;">40</div>
<div class="t" style="left:513.82px;top:202.79px;font-size:11px;line-height:14px;color:#222;letter-spacing:-0.459px;">179</div>
<div class="t" style="left:585.38px;top:202.79px;font-size:11px;line-height:14px;color:#222;">0</div>
<div class="t" style="left:618.28px;top:202.79px;font-size:11px;line-height:14px;color:#222;">0</div>
<div class="t" style="left:647.08px;top:202.79px;font-size:11px;line-height:14px;color:#222;">2</div>
<div class="t" style="left:683.88px;top:202.79px;font-size:11px;line-height:14px;color:#222;">0</div>
<div class="t" style="left:721.18px;top:202.79px;font-size:11px;line-height:14px;color:#222;">0</div>
<div class="t" style="left:749.98px;top:202.79px;font-size:11px;line-height:14px;color:#222;">2</div>
<div class="t" style="left:786.38px;top:202.79px;font-size:11px;line-height:14px;color:#222;">0</div>
<div class="t" style="left:823.68px;top:202.79px;font-size:11px;line-height:14px;color:#222;">0</div>
<div class="t" style="left:860.88px;top:202.79px;font-size:11px;line-height:14px;color:#222;">0</div>
<div class="t" style="left:889.78px;top:202.79px;font-size:11px;line-height:14px;color:#222;">0</div>
<div class="t" style="left:922.78px;top:202.79px;font-size:11px;line-height:14px;color:#222;">0</div>
<div class="a" style="left:4px;top:229px;width:935px;height:1px;background:#cfcfcf"></div>
<div class="a" style="left:17px;top:232.8px;width:773.8px;height:5.9px;background:#bdbdbd"></div>
<svg class="a" style="left:9px;top:232.5px;" width="5" height="7" viewBox="0 0 5 7"><path d="M4.5 0.5 L0.8 3.5 L4.5 6.5" fill="none" stroke="#b0b0b0"/></svg>
<svg class="a" style="left:930px;top:232.5px;" width="5" height="7" viewBox="0 0 5 7"><path d="M0.5 0.5 L4.2 3.5 L0.5 6.5" fill="none" stroke="#b0b0b0"/></svg>
<div class="a" style="left:10px;top:243px;width:93.5px;height:18.7px;background:#fff;border:1px solid #c8c8c8;border-radius:2px;box-sizing:border-box"></div>
<div class="t" style="left:24.60px;top:245.19px;font-size:11px;line-height:14px;color:#222;letter-spacing:-0.403px;">Wylicz godziny</div>
<div class="t" style="left:117.80px;top:242.82px;font-size:11.5px;line-height:15px;color:#ff0000;font-weight:bold;-webkit-text-stroke:0.1px currentColor;letter-spacing:0.012px;">Logo: V00002, Milewski Maciej, Umowa: Fir2/1, FTE: 1/1, SCP: podstawowy, Czas Przesłania Ewidencji: brak, Czas Zamknięcia Listy: brak</div>
<div class="a" style="left:4px;top:262.6px;width:935px;height:3.7px;background:#b6b6b6"></div>
<div class="a" style="left:466.5px;top:265px;width:2.5px;height:1px;background:#e6e6e6"></div>
<div class="a" style="left:470.5px;top:265px;width:2.5px;height:1px;background:#e6e6e6"></div>
<div class="a" style="left:474.5px;top:265px;width:2.5px;height:1px;background:#e6e6e6"></div>
<div class="a" style="left:4px;top:266px;width:935px;height:24px;background:#ebebeb"></div>
<svg class="a" style="left:9px;top:272px;" width="15" height="15" viewBox="0 0 15 15"><rect x="0.9" y="2" width="1.2" height="11.5" fill="#2d72bd"/><rect x="0.9" y="9" width="5.6" height="4.5" fill="#2d72bd"/><circle cx="9.6" cy="3.6" r="3" fill="none" stroke="#2d72bd" stroke-width="1.5"/><path d="M11.7 5.8 L13.6 7.6" stroke="#2d72bd" stroke-width="1.8"/><rect x="7.6" y="10.4" width="2.4" height="3" fill="#c3cbd3"/><rect x="11" y="10.4" width="2.4" height="3" fill="#c3cbd3"/></svg>
<div class="t" style="left:28.50px;top:271.19px;font-size:11px;line-height:14px;color:#222;letter-spacing:-0.316px;">Harmonogramowanie i kontrola</div>
<svg class="a" style="left:176.3px;top:275.5px;" width="9" height="6" viewBox="0 0 9 6"><path d="M1 1 L4.5 5 L8 1" fill="none" stroke="#333" stroke-width="1.3"/></svg>
<svg class="a" style="left:207.8px;top:273.5px;" width="4" height="7" viewBox="0 0 4 7"><path d="M4 0 L0 3.5 L4 7Z" fill="#2f6fb0"/></svg>
<div class="a" style="left:219px;top:269.6px;width:702px;height:20.4px;background:#fff"></div>
<div class="a" style="left:921px;top:269.6px;width:18px;height:20.4px;background:#ebebeb"></div>
<div class="a" style="left:219px;top:269px;width:118px;height:21px;overflow:hidden">
<div class="t" style="left:-7.33px;top:3.49px;font-size:11px;line-height:14px;color:#666;letter-spacing:-0.409px;">czasu pracy pracowników</div>
</div>
<div class="a" style="left:337px;top:270px;width:1px;height:20px;background:#d5d5d5"></div>
<div class="a" style="left:512px;top:270px;width:1px;height:20px;background:#d5d5d5"></div>
<div class="a" style="left:600px;top:270px;width:1px;height:20px;background:#d5d5d5"></div>
<div class="a" style="left:797px;top:270px;width:1px;height:20px;background:#d5d5d5"></div>
<div class="t" style="left:348.50px;top:272.49px;font-size:11px;line-height:14px;color:#666;letter-spacing:-0.382px;">Harmonogram - układ tygodniowy</div>
<div class="t" style="left:522.70px;top:272.49px;font-size:11px;line-height:14px;color:#666;letter-spacing:-0.640px;">Kalendarz RCP</div>
<div class="t" style="left:610.50px;top:272.49px;font-size:11px;line-height:14px;color:#666;letter-spacing:-0.440px;">Kontrola czasu pracy RCP [Miesięczny]</div>
<div class="a" style="left:797.3px;top:269.6px;width:123.70000000000005px;height:2px;background:#1a7fc4"></div>
<div class="a" style="left:921px;top:270px;width:1px;height:20px;background:#d5d5d5"></div>
<div class="t" style="left:807.70px;top:273.14px;font-size:10px;line-height:13px;color:#1a7fc4;font-weight:bold;-webkit-text-stroke:0.1px currentColor;letter-spacing:-0.184px;">Godziny do rozliczenia</div>
<svg class="a" style="left:928.9px;top:273.5px;" width="4" height="7" viewBox="0 0 4 7"><path d="M0 0 L4 3.5 L0 7Z" fill="#2f6fb0"/></svg>
<div class="a" style="left:4px;top:290px;width:935px;height:1px;background:#e4e4e4"></div>
<div class="a" style="left:4px;top:291px;width:935px;height:28.4px;background:#fff"></div>
<div class="a" style="left:4px;top:319px;width:935px;height:1px;background:#cfcfcf"></div>
<svg class="a" style="left:9.8px;top:296.9px;" width="15" height="15" viewBox="0 0 15 15"><path d="M5.5 14 H1.7 A1.1 1.1 0 0 1 0.6 12.9 V1.7 A1.1 1.1 0 0 1 1.7 0.6 H9.2 A1.1 1.1 0 0 1 10.3 1.7 V5.5" fill="none" stroke="#7a7a7a" stroke-width="1.1"/><circle cx="9.9" cy="10.6" r="4.4" fill="#4aa877"/><path d="M9.9 8.2 v4.8 M7.5 10.6 h4.8" stroke="#fff" stroke-width="1.3"/></svg>
<div class="t" style="left:26.80px;top:297.89px;font-size:11px;line-height:14px;color:#222;letter-spacing:-0.527px;">Nowy</div>
<svg class="a" style="left:59.2px;top:302.3px;" width="8.5" height="5.6" viewBox="0 0 8.5 5.6"><path d="M1 1 L4.25 4.6 L7.5 1" fill="none" stroke="#2c5f9a" stroke-width="1.25"/></svg>
<svg class="a" style="left:78.3px;top:296.9px;" width="14" height="15" viewBox="0 0 14 15"><path d="M4.5 14 H1.7 A1.1 1.1 0 0 1 0.6 12.9 V1.7 A1.1 1.1 0 0 1 1.7 0.6 H9 A1.1 1.1 0 0 1 10.1 1.7 V3.5" fill="none" stroke="#cfcfcf" stroke-width="1.1"/><path d="M3.5 13.8 L12.8 4" stroke="#a7c3e3" stroke-width="1.9"/></svg>
<div class="t" style="left:95.80px;top:297.89px;font-size:11px;line-height:14px;color:#b0b0b0;letter-spacing:-0.620px;">Edycja</div>
<svg class="a" style="left:135.3px;top:296.9px;" width="15" height="15" viewBox="0 0 15 15"><path d="M5 14 H1.7 A1.1 1.1 0 0 1 0.6 12.9 V1.7 A1.1 1.1 0 0 1 1.7 0.6 H8.6 A1.1 1.1 0 0 1 9.7 1.7 V5.5" fill="none" stroke="#cfcfcf" stroke-width="1.1"/><circle cx="10" cy="10.8" r="3.9" fill="#f0a9a6"/><path d="M8.5 9.3 l3 3 M11.5 9.3 l-3 3" stroke="#fff" stroke-width="1"/></svg>
<svg class="a" style="left:158.8px;top:297px;" width="16" height="15" viewBox="0 0 16 15"><rect x="3.6" y="0.6" width="8" height="5" rx="1.5" fill="#fff" stroke="#7a7a7a" stroke-width="1.1"/><path d="M1.5 4 H13.5 A1.5 1.5 0 0 1 15 5.5 V10.6 H0 V5.5 A1.5 1.5 0 0 1 1.5 4Z" fill="#6e7175"/><rect x="1.6" y="5" width="11.8" height="3" fill="#7d8084"/><rect x="3.4" y="2.8" width="8.2" height="3.7" fill="#3a78c0"/><rect x="4.5" y="9.2" width="6.4" height="5.4" fill="#d3e6f6" stroke="#858a8f" stroke-width="1"/></svg>
<svg class="a" style="left:180.7px;top:302.3px;" width="8.5" height="5.6" viewBox="0 0 8.5 5.6"><path d="M1 1 L4.25 4.6 L7.5 1" fill="none" stroke="#2c5f9a" stroke-width="1.25"/></svg>
<svg class="a" style="left:199.8px;top:296.9px;" width="16" height="16" viewBox="0 0 16 16"><path d="M7.2 13.8 H1.6 A1.1 1.1 0 0 1 0.5 12.7 V1.5 A1.1 1.1 0 0 1 1.6 0.4 H10.1 A1.1 1.1 0 0 1 11.2 1.5 V3.6" fill="none" stroke="#777" stroke-width="1.1"/><path d="M11.2 3.6 V5.6" stroke="#c4c4c4" stroke-width="1.1"/><path d="M7.4 10.2 A3.6 3.6 0 0 1 12.4 8.3" fill="none" stroke="#3aa56e" stroke-width="1.3"/><path d="M14.6 8.4 L11.3 6.2 L11.2 10Z" fill="#3aa56e"/><path d="M14.2 11.4 A3.6 3.6 0 0 1 9.2 13.6" fill="none" stroke="#3aa56e" stroke-width="1.3"/><path d="M7 13.4 L10.3 15.6 L10.4 11.8Z" fill="#3aa56e"/></svg>
<div class="t" style="left:217.60px;top:297.89px;font-size:11px;line-height:14px;color:#222;letter-spacing:-0.331px;">Status</div>
<svg class="a" style="left:251.4px;top:302.3px;" width="8.5" height="5.6" viewBox="0 0 8.5 5.6"><path d="M1 1 L4.25 4.6 L7.5 1" fill="none" stroke="#2c5f9a" stroke-width="1.25"/></svg>
<svg class="a" style="left:270.2px;top:296.9px;" width="15" height="15" viewBox="0 0 15 15"><path d="M5.5 13.6 H1.8 A1.2 1.2 0 0 1 0.6 12.4 V1.6 A1.2 1.2 0 0 1 1.8 0.4 H10 A1.2 1.2 0 0 1 11.2 1.6 V5.8" fill="none" stroke="#7a7a7a" stroke-width="1.2"/><path d="M13.29 10.08 L14.44 10.19 L14.44 11.61 L13.29 11.72 L12.97 12.51 L13.70 13.40 L12.70 14.40 L11.81 13.67 L11.02 13.99 L10.91 15.14 L9.49 15.14 L9.38 13.99 L8.59 13.67 L7.70 14.40 L6.70 13.40 L7.43 12.51 L7.11 11.72 L5.96 11.61 L5.96 10.19 L7.11 10.08 L7.43 9.29 L6.70 8.40 L7.70 7.40 L8.59 8.13 L9.38 7.81 L9.49 6.66 L10.91 6.66 L11.02 7.81 L11.81 8.13 L12.70 7.40 L13.70 8.40 L12.97 9.29Z" fill="#555"/><circle cx="10.2" cy="10.9" r="1.3" fill="#fff"/></svg>
<div class="t" style="left:287.50px;top:297.89px;font-size:11px;line-height:14px;color:#222;letter-spacing:-0.526px;">Procedury</div>
<svg class="a" style="left:337.3px;top:302.3px;" width="8.5" height="5.6" viewBox="0 0 8.5 5.6"><path d="M1 1 L4.25 4.6 L7.5 1" fill="none" stroke="#2c5f9a" stroke-width="1.25"/></svg>
<svg class="a" style="left:354.7px;top:296.5px;" width="16" height="16" viewBox="0 0 16 16"><path d="M13.9 6 V3.6 Q13.2 0.9 10.2 0.9 Q9 0.9 7.8 2 L2.4 7.6 Q0.6 9.8 1.8 11.4 Q2.8 12.6 5 12.3" fill="none" stroke="#2f6fc0" stroke-width="1.2"/><path d="M8.6 4.6 L4.4 8.8" stroke="#2f6fc0" stroke-width="1"/><circle cx="11" cy="11" r="4.6" fill="#3da571"/><path d="M11 8.6 v4.8 M8.6 11 h4.8" stroke="#fff" stroke-width="1.3"/></svg>
<div class="t" style="left:372.90px;top:297.89px;font-size:11px;line-height:14px;color:#222;letter-spacing:-0.330px;">Dodaj załączniki</div>
<svg class="a" style="left:771.4px;top:297px;" width="16" height="15" viewBox="0 0 16 15"><path d="M0.5 0 V14.5 H16" fill="none" stroke="#777"/><rect x="2" y="7" width="3.5" height="7.5" fill="#5cb85c"/><rect x="6.5" y="1" width="3.5" height="13.5" fill="#f5c400"/><rect x="11" y="4" width="3.5" height="10.5" fill="#7d4fc4"/></svg>
<svg class="a" style="left:790px;top:302.3px;" width="8.5" height="5.6" viewBox="0 0 8.5 5.6"><path d="M1 1 L4.25 4.6 L7.5 1" fill="none" stroke="#2c5f9a" stroke-width="1.25"/></svg>
<svg class="a" style="left:807px;top:296.5px;" width="17" height="17" viewBox="0 0 17 17"><path d="M6 13.5 H1.7 A1.1 1.1 0 0 1 0.6 12.4 V2 M14.6 2 V6.5" fill="none" stroke="#9c9c9c" stroke-width="1.2"/><rect x="0" y="0.4" width="15.2" height="3.3" rx="1" fill="#2f6fc0"/><rect x="9.8" y="1.6" width="1.6" height="1" fill="#cfe0f3"/><rect x="12" y="1.6" width="1.6" height="1" fill="#cfe0f3"/><circle cx="11.9" cy="10.6" r="3.4" fill="#fff" stroke="#2f6fc0" stroke-width="1.4"/><path d="M9.5 13.1 L7.9 14.7" stroke="#2f6fc0" stroke-width="2" stroke-linecap="round"/></svg>
<div class="t" style="left:826.00px;top:297.89px;font-size:11px;line-height:14px;color:#222;letter-spacing:-0.439px;">Podgląd</div>
<svg class="a" style="left:875.5px;top:296.5px;" width="16" height="16" viewBox="0 0 16 16"><path d="M14.2 6.6 A6.1 6.1 0 0 0 3.6 3.6" fill="none" stroke="#27a068" stroke-width="2.1"/><path d="M0.8 0.6 V6.7 H6.9Z" fill="#27a068"/><path d="M1.8 8.7 A6.1 6.1 0 0 0 12.4 11.6" fill="none" stroke="#27a068" stroke-width="2.1"/><path d="M15.1 14.8 V8.7 H9Z" fill="#27a068"/></svg>
<div class="a" style="left:906px;top:299px;width:1px;height:10.600000000000023px;background:#b8b8b8"></div>
<svg class="a" style="left:917px;top:297.5px;" width="16" height="15" viewBox="0 0 16 15"><circle cx="4.7" cy="5.5" r="4.2" fill="none" stroke="#2f6fc0" stroke-width="1.15"/><path d="M7.6 8.9 L10 12" stroke="#2f6fc0" stroke-width="2.3" stroke-linecap="round"/><path d="M10.4 1.6 h2.4 M10.9 3.9 h3 M11.4 5.6 h3" stroke="#86a6cc" stroke-width="0.9"/></svg>
<div class="a" style="left:897.2px;top:311.3px;width:18.7px;height:8px;background:#f5f5f5;border:1px solid #d2d2d2;border-bottom:none;border-radius:3px 3px 0 0;box-sizing:border-box"></div>
<svg class="a" style="left:902px;top:313.5px;" width="8" height="4" viewBox="0 0 8 4"><path d="M0.5 0.5 L4 3.5 L7.5 0.5" fill="none" stroke="#2f6fb0" stroke-width="1.3"/></svg>
<div class="a" style="left:4px;top:320px;width:935px;height:43.5px;background:#f0f0f0"></div>
<div class="a" style="left:516px;top:349.4px;width:42.3px;height:14px;background:#e4e4e4"></div>
<div class="a" style="left:49px;top:320px;width:1px;height:43.5px;background:#d6d6d6"></div>
<div class="a" style="left:158px;top:320px;width:1px;height:43.5px;background:#d6d6d6"></div>
<div class="a" style="left:219px;top:320px;width:1px;height:43.5px;background:#d6d6d6"></div>
<div class="a" style="left:282px;top:320px;width:1px;height:43.5px;background:#d6d6d6"></div>
<div class="a" style="left:432px;top:320px;width:1px;height:43.5px;background:#d6d6d6"></div>
<div class="a" style="left:926px;top:320px;width:1px;height:43.5px;background:#d6d6d6"></div>
<div class="a" style="left:347px;top:334.5px;width:1px;height:29.0px;background:#d6d6d6"></div>
<div class="a" style="left:473px;top:334.5px;width:1px;height:29.0px;background:#d6d6d6"></div>
<div class="a" style="left:516px;top:334.5px;width:1px;height:29.0px;background:#d6d6d6"></div>
<div class="a" style="left:655px;top:334.5px;width:1px;height:29.0px;background:#d6d6d6"></div>
<div class="a" style="left:786px;top:334.5px;width:1px;height:29.0px;background:#d6d6d6"></div>
<div class="a" style="left:385px;top:349.4px;width:1px;height:14.100000000000023px;background:#d6d6d6"></div>
<div class="a" style="left:558px;top:349.4px;width:1px;height:14.100000000000023px;background:#d6d6d6"></div>
<div class="a" style="left:617px;top:349.4px;width:1px;height:14.100000000000023px;background:#d6d6d6"></div>
<div class="a" style="left:695px;top:349.4px;width:1px;height:14.100000000000023px;background:#d6d6d6"></div>
<div class="a" style="left:748px;top:349.4px;width:1px;height:14.100000000000023px;background:#d6d6d6"></div>
<div class="a" style="left:282.4px;top:334px;width:644.0px;height:1px;background:#d6d6d6"></div>
<div class="a" style="left:347.5px;top:349px;width:84.69999999999999px;height:1px;background:#d6d6d6"></div>
<div class="a" style="left:516px;top:349px;width:270.6px;height:1px;background:#d6d6d6"></div>
<div class="a" style="left:786.6px;top:349px;width:139.79999999999995px;height:1px;background:#d6d6d6"></div>
<div class="t" style="left:53.90px;top:319.94px;font-size:10px;line-height:13px;color:#1a7fc4;font-weight:bold;-webkit-text-stroke:0.1px currentColor;letter-spacing:-0.244px;">Data</div>
<div class="a" style="left:142.6px;top:320.5px;width:15px;height:13.5px;background:#f0f0f0;border-left:1px solid #d6d6d6;border-bottom:1px solid #d6d6d6;box-sizing:border-box"></div>
<svg class="a" style="left:145.6px;top:322.0px;" width="9" height="10" viewBox="0 0 9 10"><path d="M4 9.5 V1.8 M1 4.8 L4 1.5 L7 4.8" fill="none" stroke="#38a56c" stroke-width="1.3"/></svg>
<div class="t" style="left:162.50px;top:319.94px;font-size:10px;line-height:13px;color:#1c1c1c;font-weight:bold;-webkit-text-stroke:0.1px currentColor;letter-spacing:-0.220px;">Rok</div>
<div class="t" style="left:224.40px;top:319.94px;font-size:10px;line-height:13px;color:#1c1c1c;font-weight:bold;-webkit-text-stroke:0.1px currentColor;letter-spacing:-0.076px;">Miesiąc</div>
<div class="t" style="left:286.30px;top:319.94px;font-size:10px;line-height:13px;color:#1c1c1c;font-weight:bold;-webkit-text-stroke:0.1px currentColor;letter-spacing:-0.173px;">Rozliczenie</div>
<div class="t" style="left:436.10px;top:319.94px;font-size:10px;line-height:13px;color:#1c1c1c;font-weight:bold;-webkit-text-stroke:0.1px currentColor;letter-spacing:-0.188px;">Godziny do rozliczenia</div>
<div class="t" style="left:286.30px;top:335.24px;font-size:10px;line-height:13px;color:#1c1c1c;font-weight:bold;-webkit-text-stroke:0.1px currentColor;letter-spacing:-0.222px;">Numer</div>
<div class="t" style="left:351.90px;top:335.24px;font-size:10px;line-height:13px;color:#1c1c1c;font-weight:bold;-webkit-text-stroke:0.1px currentColor;letter-spacing:-0.191px;">Wypłata</div>
<div class="t" style="left:436.10px;top:335.24px;font-size:10px;line-height:13px;color:#1c1c1c;font-weight:bold;-webkit-text-stroke:0.1px currentColor;letter-spacing:-0.243px;">Od</div>
<div class="t" style="left:477.50px;top:335.24px;font-size:10px;line-height:13px;color:#1c1c1c;font-weight:bold;-webkit-text-stroke:0.1px currentColor;letter-spacing:-0.233px;">Do</div>
<div class="t" style="left:520.70px;top:335.24px;font-size:10px;line-height:13px;color:#1c1c1c;font-weight:bold;-webkit-text-stroke:0.1px currentColor;letter-spacing:-0.208px;">Dodatek</div>
<div class="t" style="left:660.30px;top:335.24px;font-size:10px;line-height:13px;color:#1c1c1c;font-weight:bold;-webkit-text-stroke:0.1px currentColor;letter-spacing:-0.217px;">Wynagrodzenie</div>
<div class="t" style="left:791.60px;top:335.24px;font-size:10px;line-height:13px;color:#1c1c1c;font-weight:bold;-webkit-text-stroke:0.1px currentColor;letter-spacing:-0.221px;">Rodzaj godzin</div>
<div class="t" style="left:286.30px;top:349.94px;font-size:10px;line-height:13px;color:#1c1c1c;font-weight:bold;-webkit-text-stroke:0.1px currentColor;letter-spacing:-0.140px;">listy</div>
<div class="t" style="left:351.90px;top:349.94px;font-size:10px;line-height:13px;color:#1c1c1c;font-weight:bold;-webkit-text-stroke:0.1px currentColor;letter-spacing:-0.220px;">Rok</div>
<div class="t" style="left:389.50px;top:349.94px;font-size:10px;line-height:13px;color:#1c1c1c;font-weight:bold;-webkit-text-stroke:0.1px currentColor;letter-spacing:-0.091px;">Miesiąc</div>
<div class="t" style="left:520.70px;top:349.94px;font-size:10px;line-height:13px;color:#1c1c1c;font-weight:bold;-webkit-text-stroke:0.1px currentColor;letter-spacing:-0.204px;">Czas</div>
<div class="t" style="left:562.70px;top:349.94px;font-size:10px;line-height:13px;color:#1c1c1c;font-weight:bold;-webkit-text-stroke:0.1px currentColor;letter-spacing:-0.224px;">Czas kor.</div>
<div class="t" style="left:621.50px;top:349.94px;font-size:10px;line-height:13px;color:#1c1c1c;font-weight:bold;-webkit-text-stroke:0.1px currentColor;letter-spacing:-0.191px;">Saldo</div>
<div class="t" style="left:660.30px;top:349.94px;font-size:10px;line-height:13px;color:#1c1c1c;font-weight:bold;-webkit-text-stroke:0.1px currentColor;letter-spacing:-0.204px;">Czas</div>
<div class="t" style="left:699.70px;top:349.94px;font-size:10px;line-height:13px;color:#1c1c1c;font-weight:bold;-webkit-text-stroke:0.1px currentColor;letter-spacing:-0.212px;">Czas kor.</div>
<div class="t" style="left:753.20px;top:349.94px;font-size:10px;line-height:13px;color:#1c1c1c;font-weight:bold;-webkit-text-stroke:0.1px currentColor;letter-spacing:-0.365px;">Saldo</div>
<div class="t" style="left:791.60px;top:349.94px;font-size:10px;line-height:13px;color:#1c1c1c;font-weight:bold;-webkit-text-stroke:0.1px currentColor;letter-spacing:-0.227px;">Kod</div>
<div class="a" style="left:10.5px;top:350.3px;width:11px;height:11px;background:#fff;border:1px solid #c3c3c3;box-sizing:border-box"></div>
<svg class="a" style="left:930.5px;top:337px;" width="6" height="9" viewBox="0 0 6 9"><path d="M5 0.5 L1 4.5 L5 8.5" fill="none" stroke="#2f6fb0" stroke-width="1.3"/></svg>
<div class="a" style="left:4px;top:364px;width:935px;height:20px;background:#fff"></div>
<div class="a" style="left:158px;top:366px;width:124.4px;height:16px;background:#fffde3"></div>
<div class="a" style="left:4px;top:363px;width:935px;height:1px;background:#c0c0c0"></div>
<div class="a" style="left:4px;top:364.3px;width:935px;height:2px;background:#1677c0"></div>
<div class="a" style="left:4px;top:382px;width:935px;height:2px;background:#1677c0"></div>
<div class="a" style="left:11px;top:368px;width:12px;height:12px;background:#fff;border:1px solid #cbcbcb;box-sizing:border-box"></div>
<div class="a" style="left:28px;top:366px;width:1px;height:16px;background:#e3ebf3"></div>
<div class="a" style="left:33.9px;top:369.2px;width:10.1px;height:9.8px;background:#fdd133"></div>
<div class="a" style="left:50.8px;top:366.2px;width:106.5px;height:15.6px;background:#fffde3;border:2px solid #0f6fb8;box-sizing:border-box"></div>
<div class="t" style="left:53.90px;top:367.09px;font-size:11px;line-height:14px;color:#222;letter-spacing:-0.385px;">05.03.2020</div>
<div class="t" style="left:193.36px;top:367.09px;font-size:11px;line-height:14px;color:#222;letter-spacing:-0.459px;">2020</div>
<div class="t" style="left:271.68px;top:367.09px;font-size:11px;line-height:14px;color:#222;">3</div>
<div class="t" style="left:359.26px;top:367.09px;font-size:11px;line-height:14px;color:#222;letter-spacing:-0.459px;">2020</div>
<div class="t" style="left:421.98px;top:367.09px;font-size:11px;line-height:14px;color:#222;">3</div>
<div class="t" style="left:436.10px;top:367.09px;font-size:11px;line-height:14px;color:#222;letter-spacing:-0.466px;">08:00</div>
<div class="t" style="left:477.00px;top:367.09px;font-size:11px;line-height:14px;color:#222;letter-spacing:-0.466px;">10:00</div>
<div class="t" style="left:520.30px;top:367.09px;font-size:11px;line-height:14px;color:#222;letter-spacing:-0.466px;">02:00</div>
<div class="t" style="left:563.00px;top:367.09px;font-size:11px;line-height:14px;color:#222;letter-spacing:-0.466px;">00:00</div>
<div class="t" style="left:622.00px;top:367.09px;font-size:11px;line-height:14px;color:#222;letter-spacing:-0.466px;">02:00</div>
<div class="t" style="left:660.30px;top:367.09px;font-size:11px;line-height:14px;color:#222;letter-spacing:-0.466px;">02:00</div>
<div class="t" style="left:699.30px;top:367.09px;font-size:11px;line-height:14px;color:#222;letter-spacing:-0.466px;">00:00</div>
<div class="t" style="left:752.70px;top:367.09px;font-size:11px;line-height:14px;color:#222;letter-spacing:-0.466px;">02:00</div>
<div class="t" style="left:791.60px;top:367.09px;font-size:11px;line-height:14px;color:#222;letter-spacing:-0.561px;">GNWyplata50</div>
<div class="a" style="left:4px;top:642px;width:935px;height:1px;background:#c6c6c6"></div>
<div class="a" style="left:16.4px;top:646px;width:591.6px;height:6.7px;background:#bdbdbd"></div>
<svg class="a" style="left:8px;top:645.5px;" width="5" height="7" viewBox="0 0 5 7"><path d="M4.5 0.5 L0.8 3.5 L4.5 6.5" fill="none" stroke="#b0b0b0"/></svg>
<svg class="a" style="left:931px;top:645.4px;" width="5" height="7" viewBox="0 0 5 7"><path d="M0.5 0.5 L4.2 3.5 L0.5 6.5" fill="none" stroke="#b0b0b0"/></svg>
</body></html>
